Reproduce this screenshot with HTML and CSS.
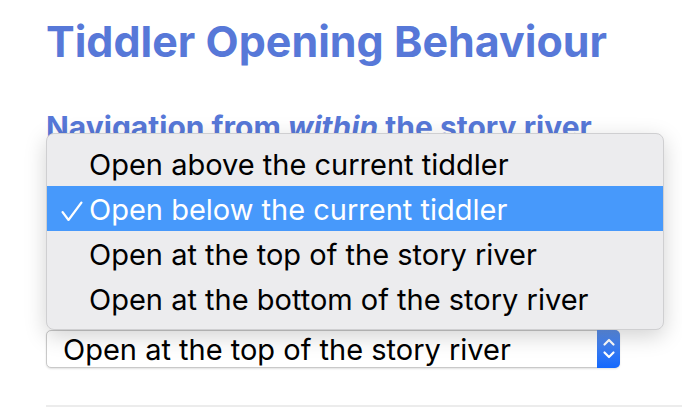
FILE: index.html
```html
<!DOCTYPE html>
<html>
<head>
<meta charset="utf-8">
<link rel="stylesheet" href="styles.css">
</head>
<body>
<div class="page">
  <h1 class="title">Tiddler Opening Behaviour</h1>
  <h2 class="subtitle">Navigation from <em>within</em> the story river</h2>
  <div class="field">
    <div class="menu">
      <div class="item">Open above the current tiddler</div>
      <div class="item selected"><svg class="check" width="22" height="21" viewBox="0 0 22 21"><path d="M1.5 11 L7.5 19 L20.5 1.5" fill="none" stroke="#fff" stroke-width="2.1" stroke-linecap="round" stroke-linejoin="round"/></svg>Open below the current tiddler</div>
      <div class="item">Open at the top of the story river</div>
      <div class="item">Open at the bottom of the story river</div>
    </div>
    <div class="select">
      <span class="value">Open at the top of the story river</span>
      <span class="stepper">
        <svg width="14" height="26" viewBox="0 0 14 26"><path d="M2.5 8.5 L7 4 L11.5 8.5" fill="none" stroke="#fff" stroke-width="2.2" stroke-linecap="round" stroke-linejoin="round"/><path d="M2.5 16.5 L7 21 L11.5 16.5" fill="none" stroke="#fff" stroke-width="2.2" stroke-linecap="round" stroke-linejoin="round"/></svg>
      </span>
    </div>
  </div>
  <hr class="rule">
</div>
</body>
</html>
```

FILE: styles.css
```css
html, body {
  margin: 0;
  padding: 0;
  background: #ffffff;
}
body {
  width: 682px;
  height: 416px;
  overflow: hidden;
  font-family: Inter, "Liberation Sans", sans-serif;
}
.page {
  padding: 0 0 0 46px;
}
.title {
  margin: 0;
  padding-top: 15px;
  font-size: 43px;
  line-height: 52px;
  font-weight: 700;
  color: #5778d8;
  letter-spacing: 0;
}
.subtitle {
  margin: 42px 0 0 0;
  font-size: 30px;
  line-height: 36px;
  font-weight: 700;
  color: #5778d8;
}
.subtitle em {
  font-style: italic;
}
.field {
  position: relative;
  margin-top: 185px;
  width: 574px;
}
.menu {
  position: absolute;
  left: 0;
  bottom: 100%;
  width: 616px;
  padding: 7px 0 8px 0;
  background: #ececee;
  border: 1px solid #cfcfd1;
  border-radius: 8px;
  box-shadow: 0 6px 22px rgba(0,0,0,0.18);
  font-size: 29px;
  color: #000;
}
.item {
  height: 45px;
  line-height: 47px;
  padding-left: 42px;
  position: relative;
}
.item.selected {
  background: #4799fb;
  color: #fff;
}
.check {
  position: absolute;
  left: 14px;
  top: 15px;
}
.select {
  display: flex;
  align-items: stretch;
  height: 38px;
  border: 1px solid #c9c9c9;
  border-radius: 5px;
  background: #ffffff;
  box-shadow: 0 1px 2px rgba(0,0,0,0.12);
  box-sizing: border-box;
}
.value {
  flex: 1;
  padding-left: 16px;
  font-size: 29px;
  line-height: 38px;
  color: #000;
}
.stepper {
  width: 23px;
  margin: -1px -1px -1px 0;
  border-radius: 0 5px 5px 0;
  background: linear-gradient(#5d8fe6, #1468fd);
  display: flex;
  align-items: center;
  justify-content: center;
}
.rule {
  margin: 37px 0 0 0;
  border: 0;
  height: 2px;
  background: #ececec;
}
```
